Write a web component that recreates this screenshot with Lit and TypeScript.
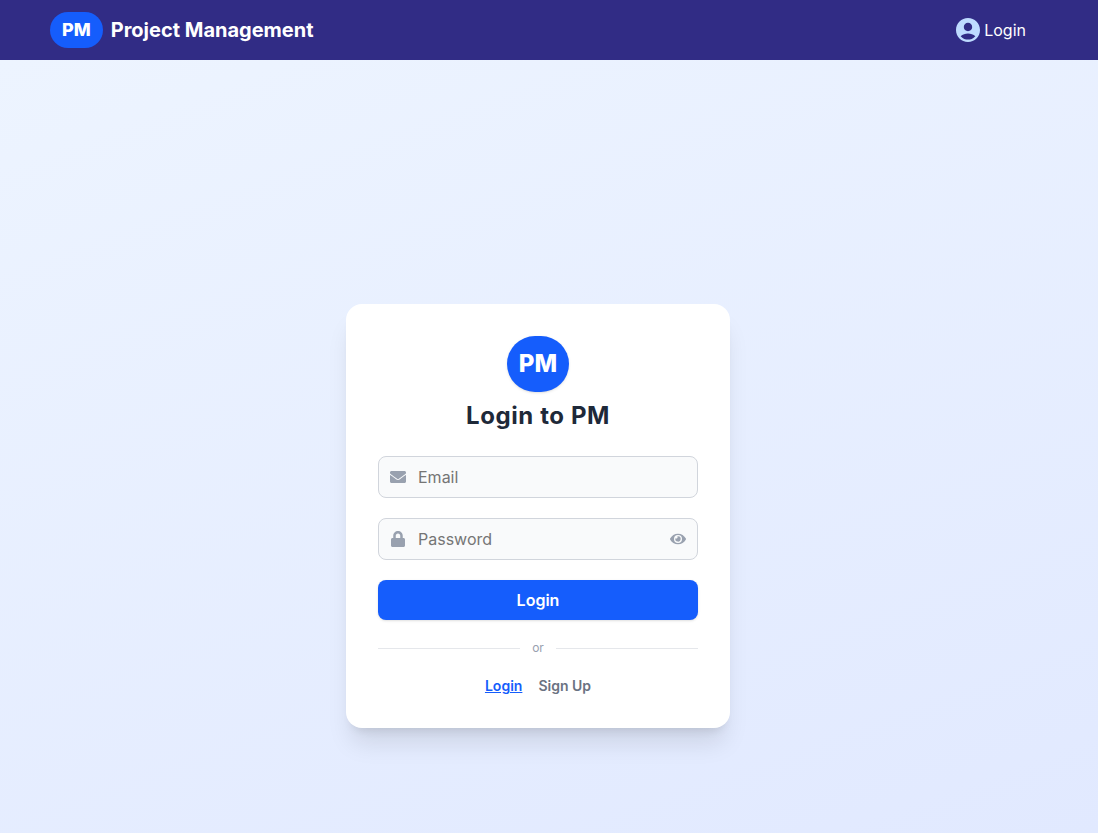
import { LitElement, html, css, svg } from "lit";
import { customElement, state } from "lit/decorators.js";

const userIcon = svg`<path fill="currentColor" d="M12 2C6.48 2 2 6.48 2 12s4.480 10 10 10 10-4.480 10-10S17.520 2 12 2zm0 4c1.930 0 3.500 1.570 3.500 3.500S13.930 13 12 13s-3.500-1.570-3.500-3.500S10.070 6 12 6zm0 14c-2.030 0-4.430-.82-6.140-2.880C7.550 15.800 9.680 15 12 15s4.450.8 6.140 2.120C16.430 19.180 14.030 20 12 20z"/>`;
const mailIcon = svg`<path fill="currentColor" d="M502.300 190.800c3.900-3.100 9.700-.2 9.700 4.700V400c0 26.500-21.500 48-48 48H48c-26.500 0-48-21.500-48-48V195.600c0-5 5.700-7.800 9.700-4.700 22.400 17.400 52.100 39.500 154.100 113.600 21.100 15.400 56.700 47.800 92.200 47.600 35.700.3 72-32.800 92.300-47.600 102-74.100 131.600-96.300 154-113.700zM256 320c23.200.4 56.600-29.200 73.400-41.400 132.700-96.300 142.800-104.700 173.400-128.700 5.800-4.500 9.200-11.500 9.200-18.900v-19c0-26.500-21.500-48-48-48H48c-26.500 0-48 21.500-48 48v19c0 7.400 3.400 14.300 9.200 18.900 30.600 23.900 40.700 32.400 173.400 128.700 16.800 12.200 50.200 41.800 73.400 41.400z"/>`;
const lockIcon = svg`<path fill="currentColor" d="M400 224h-24v-72C376 68.200 307.800 0 224 0S72 68.200 72 152v72H48c-26.500 0-48 21.500-48 48v192c0 26.500 21.500 48 48 48h352c26.500 0 48-21.500 48-48V272c0-26.500-21.500-48-48-48zm-104 0H152v-72c0-39.700 32.300-72 72-72s72 32.300 72 72v72z"/>`;
const eyeIcon = svg`<path fill="currentColor" d="M572.520 241.400C518.290 135.590 410.930 64 288 64S57.680 135.640 3.480 241.410a32.350 32.350 0 0 0 0 29.190C57.710 376.410 165.070 448 288 448s230.320-71.640 284.520-177.410a32.350 32.350 0 0 0 0-29.190zM288 400a144 144 0 1 1 144-144 143.930 143.930 0 0 1-144 144zm0-240a95.310 95.310 0 0 0-25.310 3.790 47.850 47.850 0 0 1-66.900 66.900A95.780 95.780 0 1 0 288 160z"/>`;

@customElement("app-root")
export class AppRoot extends LitElement {
  @state() private showPassword = false;

  static styles = css`
    :host {
      display: flex;
      flex-direction: column;
      min-height: 100vh;
      font-family: Inter, "Liberation Sans", sans-serif;
      font-size: 16px;
      line-height: 24px;
      color: #1e2939;
    }
    * { box-sizing: border-box; }
    a { color: inherit; text-decoration: none; }
    svg { display: block; flex: none; }
    .bar {
      display: flex;
      align-items: center;
      justify-content: space-between;
      padding: 12px 72px 12px 50px;
      background: #312c85;
      color: #fff;
    }
    .brand { display: flex; align-items: center; gap: 8px; font-size: 20px; font-weight: 700; line-height: 28px; }
    .badge {
      padding: 4px 12px;
      border-radius: 999px;
      background: #155dfc;
      color: #fff;
      font-size: 18px;
      line-height: 28px;
      font-weight: 800;
    }
    .account { display: flex; align-items: center; gap: 4px; }
    .account svg { width: 24px; height: 24px; color: #bedbff; }
    .stage {
      flex: 1;
      display: flex;
      align-items: center;
      justify-content: center;
      padding: 139px 22px 0 0;
      background: linear-gradient(160deg, #edf4ff, #e1e9ff);
    }
    .card {
      width: 100%;
      max-width: 384px;
      padding: 32px;
      border-radius: 16px;
      background: #fff;
      box-shadow: 0 20px 25px -5px rgb(0 0 0 / 0.1), 0 8px 10px -6px rgb(0 0 0 / 0.1);
      display: flex;
      flex-direction: column;
      align-items: center;
    }
    .logo {
      padding: 12px;
      border-radius: 999px;
      background: #155dfc;
      color: #fff;
      font-size: 24px;
      line-height: 32px;
      font-weight: 800;
      box-shadow: 0 1px 3px rgb(0 0 0 / 0.1), 0 1px 2px -1px rgb(0 0 0 / 0.1);
    }
    h1 { margin: 8px 0 24px; font-size: 24px; line-height: 32px; font-weight: 700; letter-spacing: 0.025em; }
    form { width: 100%; display: flex; flex-direction: column; gap: 20px; }
    .field {
      display: flex;
      align-items: center;
      gap: 12px;
      padding: 8px 11px;
      border: 1px solid #d1d5dc;
      border-radius: 8px;
      background: #f9fafb;
      color: #99a1af;
    }
    .field:focus-within { border-color: #155dfc; }
    .field svg { width: 16px; height: 16px; }
    input {
      flex: 1;
      min-width: 0;
      height: 24px;
      padding: 0;
      border: 0;
      outline: 0;
      background: none;
      font: inherit;
      color: #1e2939;
    }
    input::placeholder { color: #757575; opacity: 1; }
    .peek { display: block; padding: 0; border: 0; background: none; color: inherit; cursor: pointer; }
    .submit {
      padding: 8px;
      border: 0;
      border-radius: 8px;
      background: #155dfc;
      color: #fff;
      font: inherit;
      font-weight: 600;
      cursor: pointer;
      box-shadow: 0 1px 3px rgb(0 0 0 / 0.1), 0 1px 2px -1px rgb(0 0 0 / 0.1);
    }
    .or {
      width: 100%;
      display: flex;
      align-items: center;
      gap: 12px;
      margin: 20px 0;
      font-size: 12px;
      line-height: 16px;
      color: #99a1af;
    }
    .or::before, .or::after { content: ""; flex: 1; border-top: 1px solid #e5e7eb; }
    .tabs { display: flex; gap: 16px; font-size: 14px; line-height: 20px; font-weight: 600; color: #6a7282; }
    .tabs .active { color: #155dfc; text-decoration: underline; }
  `;

  render() {
    return html`
      <header class="bar">
        <a class="brand" href="#"><span class="badge">PM</span><span>Project Management</span></a>
        <a class="account" href="#login"><svg viewBox="2 2 20 20" aria-hidden="true">${userIcon}</svg><span>Login</span></a>
      </header>
      <main class="stage">
        <section class="card">
          <span class="logo">PM</span>
          <h1>Login to PM</h1>
          <form @submit=${(e: Event) => e.preventDefault()}>
            <label class="field">
              <svg viewBox="0 0 512 512" aria-hidden="true">${mailIcon}</svg>
              <input type="email" placeholder="Email" aria-label="Email" autocomplete="email" />
            </label>
            <div class="field">
              <svg viewBox="0 0 448 512" aria-hidden="true">${lockIcon}</svg>
              <input type=${this.showPassword ? "text" : "password"} placeholder="Password" aria-label="Password" />
              <button class="peek" type="button" aria-label="Show password" @click=${() => (this.showPassword = !this.showPassword)}>
                <svg viewBox="0 0 576 512" aria-hidden="true">${eyeIcon}</svg>
              </button>
            </div>
            <button class="submit" type="submit">Login</button>
          </form>
          <div class="or">or</div>
          <nav class="tabs"><a class="active" href="#login">Login</a><a href="#signup">Sign Up</a></nav>
        </section>
      </main>
    `;
  }
}
